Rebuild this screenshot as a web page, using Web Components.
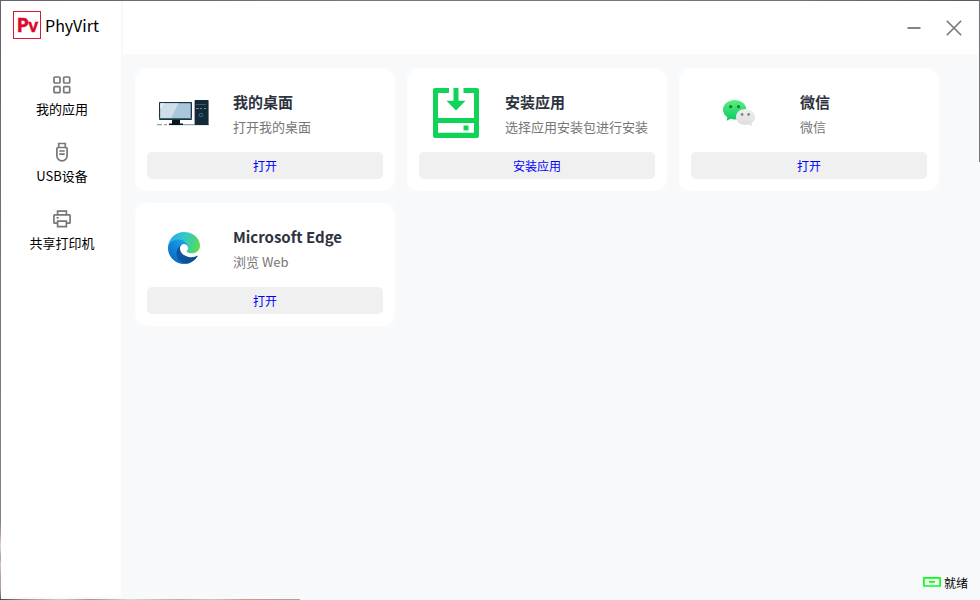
<!DOCTYPE html>
<html lang="zh-CN">
<head>
<meta charset="utf-8">
<title>PhyVirt</title>
<style>
html,body{margin:0;width:980px;height:600px;overflow:hidden}
body{font-family:"Noto Sans CJK SC",sans-serif;color:#000}
</style>
</head>
<body>
<pv-window>
  <pv-sidebar slot="side">
    <pv-nav icon="apps">我的应用</pv-nav>
    <pv-nav icon="usb">USB设备</pv-nav>
    <pv-nav icon="printer">共享打印机</pv-nav>
  </pv-sidebar>
  <pv-titlebar slot="top"></pv-titlebar>
  <pv-card icon="desktop" name="我的桌面" desc="打开我的桌面" action="打开"></pv-card>
  <pv-card icon="install" name="安装应用" desc="选择应用安装包进行安装" action="安装应用"></pv-card>
  <pv-card icon="wechat" name="微信" desc="微信" action="打开" style="--art:109px"></pv-card>
  <pv-card icon="edge" name="Microsoft Edge" desc="浏览 Web" action="打开"></pv-card>
  <pv-status slot="status">就绪</pv-status>
</pv-window>
<script>
const ICONS = {
  apps: `<svg width="18" height="18" viewBox="0 0 18 18" fill="none" stroke="#777" stroke-width="1.7"><rect x="1" y="1" width="6" height="6" rx="1"/><rect x="10.700" y="1" width="6" height="6" rx="1"/><rect x="1" y="10.700" width="6" height="6" rx="1"/><rect x="10.700" y="10.700" width="6" height="6" rx="1"/></svg>`,
  usb: `<svg width="18" height="20" viewBox="0 0 18 20" fill="none" stroke="#777" stroke-width="1.7"><path d="M5.700 5.200V1.500h6.600v3.700M5 5.500h8q1.100 0 1.100 1.100v7.100a5.100 5.100 0 0 1-10.200 0V6.600q0-1.100 1.100-1.100zM6.300 9h5.400M6.300 12.200h5.400"/></svg>`,
  printer: `<svg width="18" height="18" viewBox="0 0 18 18" fill="none" stroke="#777" stroke-width="1.7"><path d="M4.600 4.800V1.200h8.800v3.600M4.600 13.200H1.700q-.8 0-.8-.8V5.700q0-.8.8-.8h14.600q.8 0 .8.8v6.700q0 .8-.8.8h-2.900M4.600 11.200h8.800v5.500H4.600zM3.600 7.800h2"/></svg>`,
  desktop: `<svg width="54" height="30" viewBox="0 0 54 30" style="margin:0 2px 2px 0"><path d="M1 27.700h5m2 0h3m2 0h40" stroke="#93a3ac" stroke-width="1.2"/><rect x="3" y="5" width="33" height="18" rx=".8" fill="#1d3340"/><rect x="4.300" y="6.200" width="30.400" height="14.900" fill="#a9c6da"/><path d="M4.300 6.200h18L15.300 21.100h-11z" fill="#cfdfe9"/><path d="M4.300 6.200h4l-3 5h-1z" fill="#e4edf2"/><path d="M3 21.500h33" stroke="#40717f" stroke-width=".8"/><path d="M16 23h8v3.500h3V28H13v-1.500h3z" fill="#0b171f"/><rect x="38.600" y="3" width="14" height="25" rx=".8" fill="#142a39"/><path d="M40 7.500h10" stroke="#365d74"/><path d="M40 11.500h3m1 0h2m2 0h2" stroke="#8ba0aa" stroke-width=".8"/><circle cx="45" cy="18" r="1.800" fill="none" stroke="#37708b" stroke-width=".9"/></svg>`,
  install: `<svg width="46" height="50" viewBox="0 0 46 50.700" preserveAspectRatio="none" fill="#10d457"><path fill-rule="evenodd" d="M2 0H16V5H5V30.500H41V5H30.500V0H44q2 0 2 2V49q0 1.700-2 1.700H2Q0 50.700 0 49V2Q0 0 2 0zM5 35.500V45.500H41V35.500z"/><path d="M20.500 0h5v13H32.500L23 22.700 13.500 13h7z"/><path d="M30.500 38h5v5h-5z"/></svg>`,
  wechat: `<svg width="33" height="28" viewBox="0 0 33 28"><defs><linearGradient id="g" x2="0" y2="1"><stop stop-color="#5cf07c"/><stop offset="1" stop-color="#08c963"/></linearGradient><linearGradient id="w" x2="0" y2="1"><stop stop-color="#efefef"/><stop offset="1" stop-color="#dcdcdc"/></linearGradient></defs><path fill="url(#g)" d="M11.700 1C5.200 1 0 5.300 0 10.700c0 3 1.700 5.600 4.300 7.400L3.700 21.800l4-2c1.200.4 2.600.6 4 .6 6.500 0 11.700-4.300 11.700-9.700S18.200 1 11.700 1z"/><circle cx="7.700" cy="7.700" r="1.600" fill="#177e43"/><circle cx="15.500" cy="7.700" r="1.600" fill="#177e43"/><path fill="url(#w)" d="M22.400 10c-5.300 0-9.500 3.600-9.500 8s4.200 8 9.500 8c1.300 0 2.400-.2 3.500-.5l3.100 1.600-.6-2.800c2.200-1.400 3.600-3.700 3.600-6.300 0-4.400-4.300-8-9.600-8z"/><circle cx="19.100" cy="15.500" r="1.400" fill="#858585"/><circle cx="25.600" cy="15.500" r="1.400" fill="#858585"/></svg>`,
  edge: `<svg width="32" height="32" viewBox="0 0 256 256"><defs><linearGradient id="a" x1="63" y1="178" x2="241" y2="178" gradientUnits="userSpaceOnUse"><stop stop-color="#0c59a4"/><stop offset="1" stop-color="#114a8b"/></linearGradient><linearGradient id="b" x1="140" y1="100" x2="40" y2="225" gradientUnits="userSpaceOnUse"><stop stop-color="#1b9de2"/><stop offset=".5" stop-color="#0f83d7"/><stop offset="1" stop-color="#0870ca"/></linearGradient><linearGradient id="c" x1="20" y1="60" x2="245" y2="135" gradientUnits="userSpaceOnUse"><stop stop-color="#2bafe8"/><stop offset=".45" stop-color="#35c8c7"/><stop offset=".75" stop-color="#43d18f"/><stop offset="1" stop-color="#65dd43"/></linearGradient></defs><path fill="url(#a)" d="M231 190.500a93 93 0 0 1-10.500 4.700 102 102 0 0 1-36 6.500c-47.500 0-88.800-32.700-88.800-74.600a31.600 31.600 0 0 1 16.400-27.400c-43 1.800-54 46.500-54 72.700 0 74 68.300 81.600 83 81.600 8 0 20-2.300 27-4.600l1.300-.4a128 128 0 0 0 66.600-52.700c3-4.500-.5-8-5-5.800z"/><path fill="url(#b)" d="M105.700 241.400a79 79 0 0 1-22.700-21.300 80.700 80.700 0 0 1 29.200-120.500c3.200-1.500 8.500-4.100 15.600-4a32 32 0 0 1 25.700 13 32 32 0 0 1 6.300 18.700c0-.2 24.500-79.600-80-79.600C36 47.700 0 89.400 0 126c0 20 4 40 12 56a128 128 0 0 0 156.400 67 75.500 75.500 0 0 1-62.700-7.600z"/><path fill="url(#c)" d="M152.300 148.900c-.9 1-3.400 2.500-3.400 5.600 0 2.600 1.700 5.200 4.800 7.300 14.400 10 41.500 8.700 41.600 8.700a59.500 59.500 0 0 0 30.300-8.300 61.500 61.500 0 0 0 30.400-52.900c.3-22.400-8-37.300-11.300-43.900C223.500 23.900 177.700 0 128 0A128 128 0 0 0 0 126.200c.5-36.600 36.900-66 80-66 3.500 0 23.500.3 42 10a72 72 0 0 1 30.900 29.300c6.100 10.600 7.200 24.100 7.200 29.500 0 5.400-2.700 13.300-7.800 19.900z"/></svg>`
};
const define = (tag, html) => customElements.define(tag, class extends HTMLElement {
  constructor() {
    super();
    this.attachShadow({mode: "open"}).innerHTML = html(this);
  }
});

define("pv-window", () => `<style>
:host{display:grid;box-sizing:border-box;width:980px;height:600px;grid-template:54px 1fr/121px 1fr;background:#f7f9fb;border-left:1px solid transparent;position:relative}
.edge{position:absolute;pointer-events:none}
.top{left:-1px;top:0;width:980px;height:1px;background:linear-gradient(90deg,#67616b,#7b757e 40%,#77717a 80%,#5b5862)}
.left{left:-1px;top:0;width:1px;height:600px;background:linear-gradient(#67616b,#85808a 87%,#b69c91 89%,#d5d6e0 91%,#b99a91 93%,#c9c4ce 94%,#c39c97 96%,#a9a2a6 98%,#635d5c)}
.right{right:0;top:0;width:1px;height:162px;background:#77777b}
.bottom{left:-1px;bottom:0;width:300px;height:1px;background:linear-gradient(90deg,#4b4443,#a18f8a 8%,#d4cbc8 20%,#a5948e 30%,#d5d5d8 43%,#c2aea2 60%,#d1c6bc 70%,#baa292 82%,#b49f97)}
slot[name=side]{display:block;grid-row:1/3}
slot[name=top]{display:block}
main{display:flex;flex-direction:column;padding:14px 12px 8px 13px;justify-content:space-between}
.grid{display:grid;grid-template-columns:repeat(3,260px);grid-auto-rows:123px;gap:12px}
</style><slot name="side"></slot><slot name="top"></slot><main><div class="grid"><slot></slot></div><slot name="status"></slot></main>
<i class="edge left"></i><i class="edge top"></i><i class="edge right"></i><i class="edge bottom"></i>`);

define("pv-sidebar", () => `<style>
:host{display:flex;flex-direction:column;box-sizing:border-box;width:120px;height:597px;background:#fff}
.brand{display:flex;align-items:center;gap:4px;padding:11px 0 0 12px;height:28px;font-size:16px;line-height:24px}
.logo{box-sizing:border-box;width:28px;height:28px;border:1px solid #e0172f;color:#dc0a28;display:flex;justify-content:center;align-items:baseline;font:bold 20px/25px "Open Sans","Noto Sans",sans-serif;letter-spacing:-.8px;-webkit-text-stroke:.3px #dc0a28}
.logo small{font-size:17.500px;line-height:20px}
.name{padding-bottom:1px}
nav{display:flex;flex-direction:column;padding-top:36px}
</style><div class="brand"><span class="logo"><span>P</span><small>v</small></span><span class="name">PhyVirt</span></div><nav><slot></slot></nav>`);

define("pv-nav", el => `<style>
:host{display:flex;flex-direction:column;align-items:center;box-sizing:border-box;height:67px;padding-left:2px;font-size:13px;line-height:20px}
.i{height:20px;display:flex;align-items:center;margin-bottom:4px}
</style><span class="i">${ICONS[el.getAttribute("icon")]}</span><span><slot></slot></span>`);

define("pv-titlebar", () => `<style>
:host{display:flex;justify-content:flex-end;align-items:center;gap:24px;box-sizing:border-box;height:53px;margin:1px 2px 0 1px;padding:1px 16px 0 0;background:#fff}
svg{fill:none;stroke:#777}
</style><svg width="16" height="16"><path d="M1.500 8h13" stroke-width="1.800"/></svg><svg width="16" height="16"><path d="M.8.8l14.400 14.400M15.200.8.8 15.200" stroke-width="1.600"/></svg>`);

define("pv-card", el => `<style>
:host{display:block;background:#fafbfc}
.card{box-sizing:border-box;height:123px;padding:12px;background:#fff;border-radius:14px;display:flex;flex-direction:column;justify-content:space-between}
.info{display:flex;height:66px;align-items:center}
.art{width:var(--art,86px);display:flex;justify-content:center;flex:none;box-sizing:border-box;padding-right:12px}
.text{padding-top:2px}
h3{margin:0;font-size:15px;line-height:24px;font-weight:700;color:#2d333e;white-space:nowrap}
p{margin:1px 0 0;font-size:13px;line-height:24px;color:#777;white-space:nowrap}
button{display:block;width:100%;height:27px;padding:0;border:0;border-radius:5px;background:#f0f0f0;color:#00f;font:12px/27px "Noto Sans CJK SC",sans-serif}
svg{display:block}
</style><div class="card"><div class="info"><div class="art">${ICONS[el.getAttribute("icon")]}</div><div class="text"><h3>${el.getAttribute("name")}</h3><p>${el.getAttribute("desc")}</p></div></div><button>${el.getAttribute("action")}</button></div>`);

define("pv-status", () => `<style>
:host{display:flex;justify-content:flex-end;align-items:center;gap:3px;font-size:12px;line-height:18px}
svg{margin-bottom:2px}
</style><svg width="18" height="10" fill="none" stroke="#0f1" stroke-width="1.700"><rect x=".9" y=".9" width="16.300" height="8.100" rx=".5"/><path d="M6 4.900h6"/></svg><span><slot></slot></span>`);
</script>
</body>
</html>
